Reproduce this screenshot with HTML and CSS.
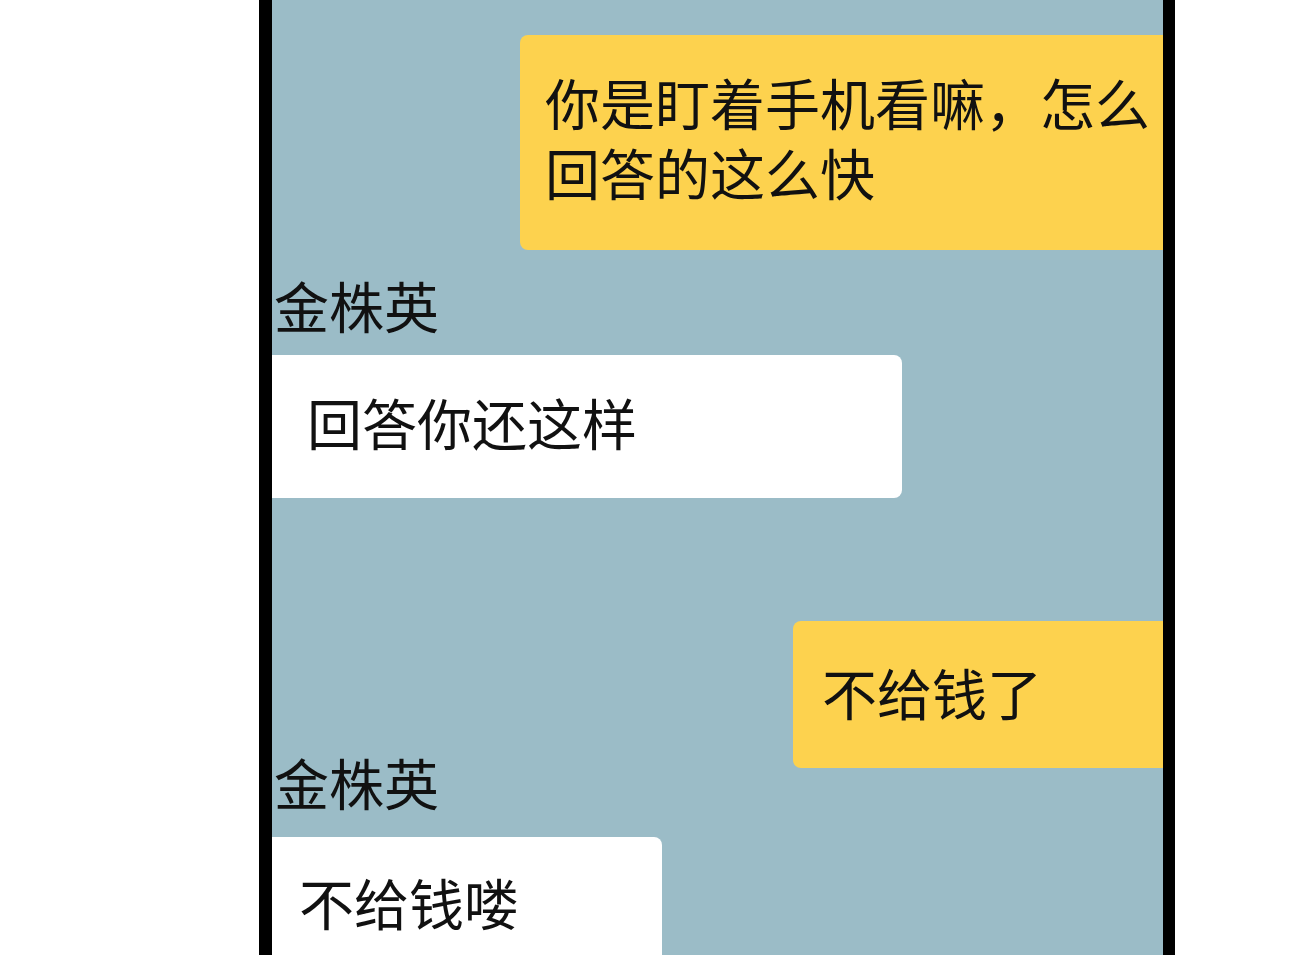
FILE: index.html
```html
<!DOCTYPE html>
<html lang="zh-CN">
<head>
    <meta charset="UTF-8">
    <meta name="viewport" content="width=device-width, initial-scale=1.0">
    <title>聊天</title>
    <link rel="stylesheet" href="styles.css">
</head>
<body>
    <div class="phone">
        <div class="chat">
            <div class="bubble bubble-me msg-1">你是盯着手机看嘛，怎么回答的这么快</div>

            <div class="sender sender-1">金株英</div>
            <div class="bubble bubble-them msg-2">回答你还这样</div>

            <div class="bubble bubble-me msg-3">不给钱了</div>

            <div class="sender sender-2">金株英</div>
            <div class="bubble bubble-them msg-4">不给钱喽</div>
        </div>
    </div>
</body>
</html>
```

FILE: styles.css
```css
body {
    margin: 0;
    background: #fff;
    font-family: "Noto Sans CJK SC", "Noto Sans", sans-serif;
    color: #111;
    height: 955px;
    overflow: hidden;
}

.phone {
    margin-left: 259px;
    width: 891px;
    height: 955px;
    border-left: 13px solid #000;
    border-right: 12px solid #000;
    background: #9bbcc7;
    overflow: hidden;
}

.chat {
    display: flex;
    flex-direction: column;
}

.bubble {
    box-sizing: border-box;
    font-size: 55px;
    line-height: 70px;
}

.bubble-me {
    align-self: flex-end;
    background: #fdd24e;
    border-radius: 8px 0 0 8px;
}

.bubble-them {
    align-self: flex-start;
    background: #fff;
    border-radius: 0 8px 8px 0;
}

.sender {
    font-size: 55px;
    line-height: 60px;
    padding-left: 2px;
}

.msg-1 {
    width: 643px;
    margin-top: 35px;
    padding: 31px 0 44px 25px;
}

.sender-1 {
    margin-top: 24px;
}

.msg-2 {
    width: 630px;
    margin-top: 21px;
    padding: 31px 0 42px 35px;
}

.msg-3 {
    width: 370px;
    margin-top: 123px;
    padding: 35px 0 42px 29px;
}

.sender-2 {
    margin-top: -17px;
}

.msg-4 {
    width: 390px;
    margin-top: 26px;
    padding: 29px 0 43px 27px;
}
```
